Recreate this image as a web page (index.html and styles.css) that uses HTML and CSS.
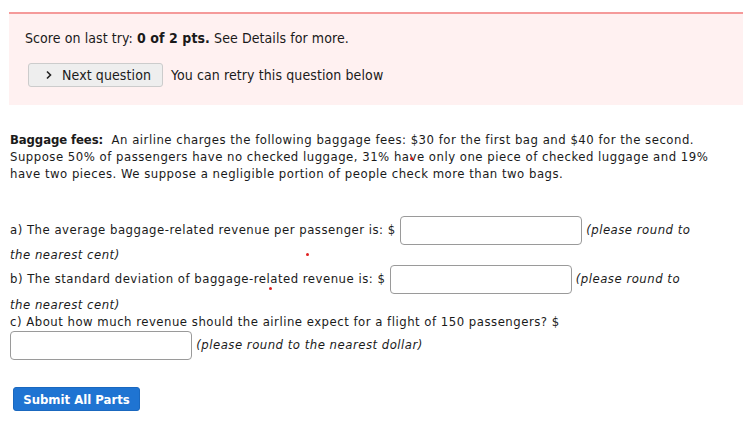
FILE: index.html
```html
<!DOCTYPE html>
<html>
<head>
<meta charset="utf-8">
<link rel="stylesheet" href="styles.css">
</head>
<body>
<div class="page">
  <div class="notice">
    <p class="score">Score on last try: <b>0 of 2 pts.</b> See Details for more.</p>
    <div class="retry">
      <button class="next-btn"><svg class="chev" width="8" height="10" viewBox="0 0 8 10"><path d="M2 1.5 L5.5 5 L2 8.5" fill="none" stroke="#222" stroke-width="1.6"/></svg>Next question</button>
      <span class="retry-note">You can retry this question below</span>
    </div>
  </div>

  <div class="question">
    <p class="intro"><b>Baggage fees:</b>&nbsp; An airline charges the following baggage fees: $30 for the first bag and $40 for the second. Suppose 50% of passengers have no checked luggage, 31% have only one piece of checked luggage and 19% have two pieces. We suppose a negligible portion of people check more than two bags.</p>

    <div class="parts">
      <p class="part part-a">a) The average baggage-related revenue per passenger is: $ <input class="ans ans-a" type="text"> <i>(please round to the nearest cent)</i></p>
      <p class="part part-b">b) The standard deviation of baggage-related revenue is: $ <input class="ans ans-b" type="text"> <i>(please round to the nearest cent)</i></p>
      <p class="part part-c">c) About how much revenue should the airline expect for a flight of 150 passengers? $ <input class="ans ans-c" type="text"> <i>(please round to the nearest dollar)</i></p>
    </div>

    <button class="submit">Submit All Parts</button>

    <span class="dot dot1"></span>
    <span class="dot dot2"></span>
    <span class="dot dot3"></span>
  </div>
</div>
</body>
</html>
```

FILE: styles.css
```css
html, body {
  margin: 0;
  padding: 0;
  background: #ffffff;
}

body {
  font-family: "DejaVu Sans Condensed", "DejaVu Sans", sans-serif;
  color: #1a1a1a;
}

.page {
  padding-top: 12px;
}

.notice {
  margin-left: 9px;
  border-top: 2px solid #f59a9a;
  background: #fff1f1;
  padding: 15px 16px 16px 16px;
  height: 60px;
}

.score {
  margin: 0;
  font-size: 14px;
  line-height: 18px;
  letter-spacing: 0.08px;
}

.retry {
  margin-top: 16px;
  display: flex;
  align-items: center;
  gap: 8px;
  padding-left: 3px;
}

.next-btn {
  display: flex;
  align-items: center;
  gap: 9px;
  height: 24px;
  width: 135px;
  padding: 0 0 0 16px;
  border: 1px solid #cccccc;
  border-radius: 3px;
  background: #eeeeee;
  font-family: inherit;
  font-size: 14px;
  letter-spacing: 0.1px;
  color: #1a1a1a;
}

.chev {
  display: block;
}

.retry-note {
  font-size: 14px;
  letter-spacing: 0.1px;
}

.question {
  position: relative;
  padding: 0 10px;
  font-size: 13px;
  line-height: 17px;
  letter-spacing: 0.5px;
}

.intro {
  margin: 26px 0 0 0;
  width: 705px;
}

.intro b {
  letter-spacing: -0.1px;
}

.parts {
  margin-top: 33px;
  width: 690px;
}

.part {
  margin: 0;
}

.part i {
  font-style: italic;
}

.ans {
  box-sizing: border-box;
  height: 29px;
  width: 182px;
  margin: 1px 0;
  vertical-align: middle;
  border: 1px solid #9a9a9a;
  border-radius: 4px;
  background: #ffffff;
  font-family: inherit;
  font-size: 13px;
}

.part-b .ans {
  margin: 2px 0;
}

.submit {
  display: block;
  margin-top: 26px;
  margin-left: 3px;
  height: 24px;
  width: 127px;
  padding: 0;
  border: 1px solid #1a68bf;
  border-radius: 3px;
  background: #1f74d2;
  color: #ffffff;
  font-family: inherit;
  font-weight: bold;
  font-size: 13px;
  letter-spacing: 0;
}

.dot {
  position: absolute;
  width: 3px;
  height: 3px;
  border-radius: 50%;
  background: #e02020;
}

.dot1 { left: 306px; top: 122px; }
.dot2 { left: 269px; top: 156px; }
.dot3 { left: 410px; top: 26px; }
```
